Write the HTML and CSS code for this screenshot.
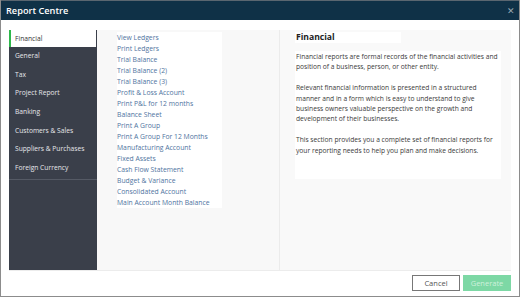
FILE: index.html
```html
<!DOCTYPE html>
<html lang="en">
<head>
    <meta charset="UTF-8">
    <title>Report Centre</title>
    <link rel="stylesheet" href="styles.css">
</head>
<body>
    <div class="dialog">
        <div class="titlebar">
            <span class="title">Report Centre</span>
            <span class="close">&#x2715;</span>
        </div>
        <div class="main">
            <ul class="sidebar">
                <li class="active">Financial</li>
                <li>General</li>
                <li>Tax</li>
                <li>Project Report</li>
                <li>Banking</li>
                <li>Customers &amp; Sales</li>
                <li>Suppliers &amp; Purchases</li>
                <li>Foreign Currency</li>
            </ul>
            <div class="reports">
                <ul class="report-list">
                    <li>View Ledgers</li>
                    <li>Print Ledgers</li>
                    <li>Trial Balance</li>
                    <li>Trial Balance (2)</li>
                    <li>Trial Balance (3)</li>
                    <li>Profit &amp; Loss Account</li>
                    <li>Print P&amp;L for 12 months</li>
                    <li>Balance Sheet</li>
                    <li>Print A Group</li>
                    <li>Print A Group For 12 Months</li>
                    <li>Manufacturing Account</li>
                    <li>Fixed Assets</li>
                    <li>Cash Flow Statement</li>
                    <li>Budget &amp; Variance</li>
                    <li>Consolidated Account</li>
                    <li>Main Account Month Balance</li>
                </ul>
            </div>
            <div class="info">
                <h2 class="info-title">Financial</h2>
                <div class="info-body">
                    <p>Financial reports are formal records of the financial activities and position of a business, person, or other entity.</p>
                    <p>Relevant financial information is presented in a structured manner and in a form which is easy to understand to give business owners valuable perspective on the growth and development of their businesses.</p>
                    <p>This section provides you a complete set of financial reports for your reporting needs to help you plan and make decisions.</p>
                </div>
            </div>
        </div>
        <div class="footer">
            <button class="btn btn-cancel">Cancel</button>
            <button class="btn btn-generate">Generate</button>
        </div>
    </div>
</body>
</html>
```
FILE: styles.css
```css
body {
    margin: 0;
    padding: 0;
    font-family: "Open Sans", sans-serif;
    background-color: #fff;
}

.dialog {
    width: 520px;
    height: 297px;
    box-sizing: border-box;
    border: 1px solid #8c8c8c;
    border-top: none;
    display: flex;
    flex-direction: column;
}

.titlebar {
    height: 19px;
    background-color: #0f3147;
    border-top: 1px solid #5a6670;
    display: flex;
    align-items: center;
    justify-content: space-between;
    padding: 0 4px 0 5px;
}

.title {
    color: #fff;
    font-size: 9.2px;
    font-weight: 600;
}

.close {
    color: #9aa8b2;
    font-size: 9px;
    font-weight: 300;
}

.main {
    display: flex;
    height: 240px;
    margin: 10px 8px 0 8px;
    border-bottom: 1px solid #ececec;
}

.sidebar {
    list-style: none;
    margin: 0;
    padding: 0;
    width: 88px;
    background-color: #3a3f4a;
}

.sidebar li {
    height: 18.7px;
    line-height: 18.7px;
    padding-left: 6px;
    color: #e6e7ea;
    font-size: 6.7px;
    font-weight: 500;
}

.sidebar li:last-child {
    height: 20px;
    line-height: 18.7px;
    border-bottom: 1px solid #555a65;
}

.sidebar li.active {
    height: 17px;
    line-height: 17px;
    background-color: #fff;
    color: #333;
    border-left: 2px solid #2eb84b;
    padding-left: 4px;
    margin-right: 1px;
}

.reports {
    width: 183px;
    background-color: #f8f8f8;
    border-right: 1px solid #ebebeb;
    padding: 2px 0 0 20px;
    box-sizing: border-box;
}

.report-list {
    list-style: none;
    margin: 0;
    padding: 0;
    width: 105px;
    background-color: #fff;
}

.report-list li {
    height: 11px;
    line-height: 11px;
    color: #4f74a0;
    font-size: 6.8px;
    white-space: nowrap;
}

.info {
    flex: 1;
    background-color: #f9f9f9;
    padding: 2px 10px 0 15px;
}

.info-title {
    display: block;
    margin: 0;
    width: 105px;
    height: 11px;
    line-height: 11px;
    padding-left: 1px;
    background-color: #fff;
    color: #222;
    font-size: 8.6px;
    font-weight: 700;
}

.info-body {
    margin-top: 8px;
    background-color: #fff;
    padding: 1px 0 0 1px;
    height: 127px;
}

.info-body p {
    margin: 0 0 10.4px 0;
    font-size: 6.68px;
    line-height: 10.4px;
    color: #3a3a3a;
}

.footer {
    flex: 1;
    display: flex;
    justify-content: flex-end;
    align-items: flex-start;
    gap: 3px;
    padding: 4px 8px 0 0;
}

.btn {
    height: 16px;
    font-family: "Open Sans", sans-serif;
    font-size: 7.5px;
    padding: 0;
}

.btn-cancel {
    width: 48px;
    background-color: #fff;
    border: 1px solid #777;
    color: #555;
}

.btn-generate {
    width: 48px;
    background-color: #7dd8a5;
    border: 1px solid #7dd8a5;
    color: #cdf1dc;
}
```
